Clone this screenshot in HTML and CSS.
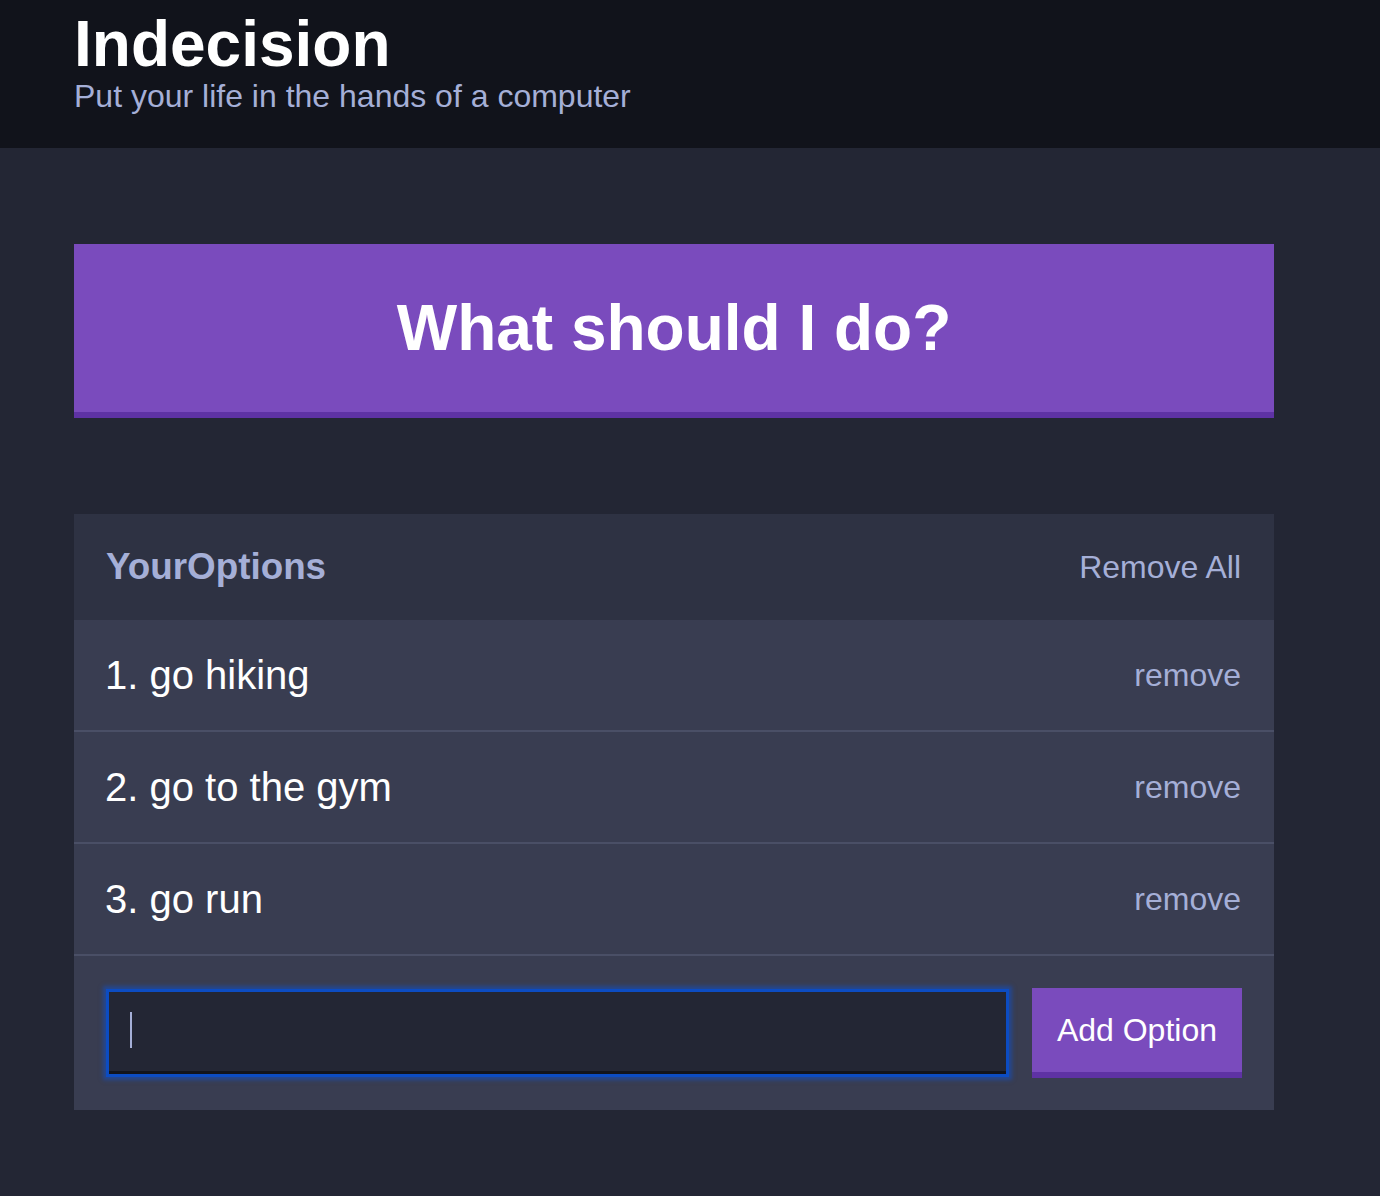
FILE: index.html
```html
<!DOCTYPE html>
<html lang="en">
<head>
<meta charset="utf-8">
<title>Indecision</title>
<link rel="stylesheet" href="styles.css">
</head>
<body>
<header class="header">
  <div class="container">
    <h1 class="header__title">Indecision</h1>
    <h2 class="header__subtitle">Put your life in the hands of a computer</h2>
  </div>
</header>
<main class="container">
  <button class="big-button">What should I do?</button>
  <section class="widget">
    <div class="widget-header">
      <h3 class="widget-header__title">YourOptions</h3>
      <button class="button--link">Remove All</button>
    </div>
    <div class="option">
      <p class="option__text">1. go hiking</p>
      <button class="button--link">remove</button>
    </div>
    <div class="option">
      <p class="option__text">2. go to the gym</p>
      <button class="button--link">remove</button>
    </div>
    <div class="option">
      <p class="option__text">3. go run</p>
      <button class="button--link">remove</button>
    </div>
    <form class="add-option">
      <span class="add-option__field">
        <input class="add-option__input" type="text" name="option">
        <span class="caret"></span>
      </span>
      <button class="button" type="button">Add Option</button>
    </form>
  </section>
</main>
</body>
</html>
```
FILE: styles.css
```css
* {
  box-sizing: border-box;
}

body {
  margin: 0;
  background: #232634;
  font-family: "Liberation Sans", Helvetica, Arial, sans-serif;
  color: #ffffff;
  min-height: 1196px;
}

.container {
  width: 1274px;
  padding-left: 74px;
}

.header {
  background: #11131b;
  height: 148px;
  padding-top: 12px;
}

.header__title {
  margin: 0;
  font-size: 64px;
  line-height: 64px;
  font-weight: 700;
  color: #ffffff;
}

.header__subtitle {
  margin: 4px 0 0;
  font-size: 32px;
  line-height: 32px;
  font-weight: 400;
  color: #a5afd7;
}

.big-button {
  display: flex;
  align-items: center;
  justify-content: center;
  width: 1200px;
  height: 174px;
  margin-top: 96px;
  padding: 0;
  background: #7a4bbd;
  border: none;
  border-bottom: 6px solid #5e32a4;
  color: #ffffff;
  font-family: inherit;
  font-size: 64px;
  font-weight: 700;
}

.widget {
  width: 1200px;
  margin-top: 96px;
  background: #393d51;
}

.widget-header {
  display: flex;
  align-items: center;
  justify-content: space-between;
  height: 106px;
  padding: 0 33px 0 32px;
  background: #2e3243;
}

.widget-header__title {
  margin: 0;
  font-size: 36.8px;
  font-weight: 700;
  color: #a5afd7;
}

.button--link {
  padding: 0;
  background: none;
  border: none;
  font-family: inherit;
  font-size: 32px;
  color: #a5afd7;
}

.option {
  display: flex;
  align-items: center;
  justify-content: space-between;
  height: 112px;
  padding: 0 33px 0 31px;
  border-bottom: 2px solid #4a4f66;
}

.option__text {
  margin: 0;
  font-size: 40px;
  color: #ffffff;
}

.add-option {
  display: flex;
  align-items: center;
  padding: 32px 32px;
}

.add-option__field {
  position: relative;
  flex: 1;
  display: flex;
  margin: 0 26px 0 3px;
}

.add-option__input {
  flex: 1;
  height: 82px;
  padding: 0 20px;
  background: #232634;
  border: none;
  border-bottom: 3px solid #12141c;
  outline: none;
  color: #a5afd7;
  caret-color: transparent;
  font-family: inherit;
  font-size: 32px;
  box-shadow: 0 0 0 3px #0c4cc2, 0 0 4px 6px rgba(18, 80, 200, 0.55);
}

.caret {
  position: absolute;
  left: 21px;
  top: 20px;
  width: 2px;
  height: 36px;
  background: #a5afd7;
}

.button {
  height: 90px;
  padding: 0 25px;
  background: #7a4bbd;
  border: none;
  border-bottom: 6px solid #5e32a4;
  color: #ffffff;
  font-family: inherit;
  font-size: 32px;
}
```
